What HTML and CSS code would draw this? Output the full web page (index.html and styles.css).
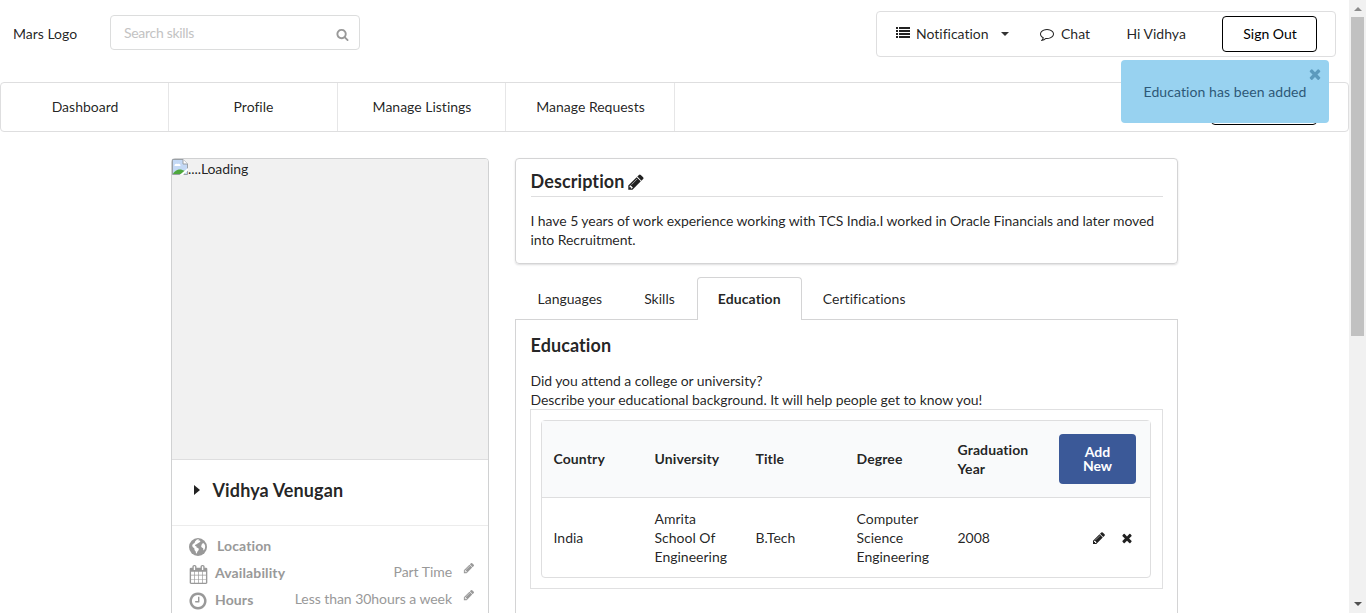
FILE: index.html
```html
<!DOCTYPE html>
<html lang="en">
<head>
<meta charset="utf-8">
<title>Profile</title>
<link rel="stylesheet" href="styles.css">
</head>
<body>
<svg class="sprite" aria-hidden="true">
  <symbol id="search" viewBox="0 0 1792 1792"><path d="M1216 832q0-185-131.5-316.5t-316.5-131.5-316.5 131.5-131.5 316.5 131.5 316.5 316.5 131.5 316.5-131.5 131.5-316.5zm512 832q0 52-38 90t-90 38q-54 0-90-38l-343-342q-179 124-399 124-143 0-273.5-55.5t-225-150-150-225-55.5-273.5 55.5-273.5 150-225 225-150 273.5-55.5 273.5 55.5 225 150 150 225 55.5 273.5q0 220-124 399l343 343q37 37 37 90z"/></symbol>
  <symbol id="pencil" viewBox="0 0 1792 1792"><path d="M491 1536l91-91-235-235-91 91v107h128v128h107zm523-928q0-22-22-22-10 0-17 7l-542 542q-7 7-7 17 0 22 22 22 10 0 17-7l542-542q7-7 7-17zm-54-192l416 416-832 832h-416v-416zm683 96q0 53-37 90l-166 166-416-416 166-165q36-38 90-38 53 0 91 38l235 234q37 39 37 91z"/></symbol>
  <symbol id="times" viewBox="0 0 1792 1792"><path d="M1490 1322q0 40-28 68l-136 136q-28 28-68 28t-68-28l-294-294-294 294q-28 28-68 28t-68-28l-136-136q-28-28-28-68t28-68l294-294-294-294q-28-28-28-68t28-68l136-136q28-28 68-28t68 28l294 294 294-294q28-28 68-28t68 28l136 136q28 28 28 68t-28 68l-294 294 294 294q28 28 28 68z"/></symbol>
  <symbol id="list" viewBox="0 0 14 14"><path d="M0 1h2v2H0zM3 1h11v2H3zM0 4h2v2H0zM3 4h11v2H3zM0 7h2v2H0zM3 7h11v2H3zM0 10h2v2H0zM3 10h11v2H3z"/></symbol>
  <symbol id="comment" viewBox="0 0 1792 1792"><path d="M896 384q-204 0-381.500 69.500t-282 187.500-104.500 255q0 112 71.500 213.500t201.500 175.500l87 50-27 96q-24 91-70 172 152-63 275-171l43-38 57 6q69 8 130 8 204 0 381.500-69.500t282-187.500 104.500-255-104.500-255-282-187.500-381.500-69.500zm896 512q0 174-120 321.500t-326 233-450 85.500q-70 0-145-8-198 175-460 242-49 14-114 22h-5q-15 0-27-10.500t-16-27.500v-1q-3-4-.5-12t2-10 4.500-9.500l6-9 7-8.500 8-9q7-8 31-34.500t34.500-38 31-39.500 32.500-51 27-59 26-76q-157-89-247.500-220t-90.500-281q0-174 120-321.500t326-233 450-85.500 450 85.500 326 233 120 321.500z"/></symbol>
  <symbol id="clock" viewBox="0 0 1792 1792"><path d="M1024 544v448q0 14-9 23t-23 9h-320q-14 0-23-9t-9-23v-64q0-14 9-23t23-9h224v-352q0-14 9-23t23-9h64q14 0 23 9t9 23zm416 352q0-148-73-273t-198-198-273-73-273 73-198 198-73 273 73 273 198 198 273 73 273-73 198-198 73-273zm224 0q0 209-103 385.500t-279.500 279.500-385.500 103-385.500-103-279.500-279.500-103-385.500 103-385.500 279.500-279.500 385.500-103 385.500 103 279.500 279.500 103 385.500z"/></symbol>
  <symbol id="calendar" viewBox="0 0 1792 1792"><path d="M192 1664h288v-288h-288v288zm352 0h320v-288h-320v288zm-352-352h288v-320h-288v320zm352 0h320v-320h-320v320zm-352-384h288v-288h-288v288zm736 736h320v-288h-320v288zm-384-736h320v-288h-320v288zm768 736h288v-288h-288v288zm-384-352h320v-320h-320v320zm-352-864v-288q0-13-9.500-22.500t-22.500-9.500h-64q-13 0-22.500 9.500t-9.500 22.500v288q0 13 9.500 22.500t22.500 9.500h64q13 0 22.500-9.500t9.500-22.500zm736 864h288v-320h-288v320zm-384-384h320v-288h-320v288zm384 0h288v-288h-288v288zm32-480v-288q0-13-9.500-22.500t-22.500-9.500h-64q-13 0-22.500 9.500t-9.500 22.500v288q0 13 9.500 22.500t22.500 9.500h64q13 0 22.500-9.500t9.500-22.500zm384-64v1280q0 52-38 90t-90 38h-1408q-52 0-90-38t-38-90v-1280q0-52 38-90t90-38h128v-96q0-66 47-113t113-47h64q66 0 113 47t47 113v96h384v-96q0-66 47-113t113-47h64q66 0 113 47t47 113v96h128q52 0 90 38t38 90z"/></symbol>
  <symbol id="globe" viewBox="0 0 18 18"><circle cx="9" cy="9" r="9"/><path class="land" d="M8 1.500 10 1.300 9.400 2.600 11 2.600 11.400 3.800 9.800 4.800 8.600 5.600 7.500 6.300 6.300 6.700 6 7.900 7.300 8.300 7.600 9.500 9 9.900 9.900 11 9.400 12.500 8.300 13.700 7.800 15.500 7 15.300 6.700 13.500 5.500 12 5.300 10.300 3.600 8.900 3.200 7 4.300 5.700 5.600 5 6 3.500zM12.900 5.900 14.200 5.100 15.400 5.900 16.200 8.100 15.900 10.600 14.800 12.400 14.200 11.600 14.200 10.200 12.800 9.500 12.100 8.300 12.600 7z"/></symbol>
</svg>

<div class="page">
  <header class="top">
    <span class="logo">Mars Logo</span>
    <label class="search"><input type="text" placeholder="Search skills"><svg class="icon"><use href="#search"/></svg></label>
    <div class="account">
      <a class="notify"><svg class="icon"><use href="#list"/></svg>Notification<i class="caret"></i></a>
      <a class="chat"><svg class="icon"><use href="#comment"/></svg>Chat</a>
      <span class="hello">Hi Vidhya</span>
      <button class="signout">Sign Out</button>
    </div>
  </header>

  <nav class="nav">
    <a>Dashboard</a><a>Profile</a><a>Manage Listings</a><a>Manage Requests</a>
    <span class="share"></span>
  </nav>

  <main class="main">
    <aside class="card">
      <div class="photo"><svg class="broken" viewBox="0 0 16 16"><path d="M.5.500H11l4.500 4.500V15.500H.5z" fill="#c4d9f5" stroke="#9aa0a6"/><path d="M11 .5V5h4.500" fill="#fff" stroke="#9aa0a6"/><path d="M2.500 7a2 2 0 0 1 3-2 2 2 0 0 1 3 2z" fill="#fff"/><path d="M1 15c1-3 5-5 8-4.500l4 1.500v3z" fill="#4fa83d"/><path d="M7.500 16l8.500-7v2.500L11 16z" fill="#fff"/></svg><span>....Loading</span></div>
      <div class="name"><i></i>Vidhya Venugan</div>
      <ul class="facts">
        <li class="location"><svg class="icon"><use href="#globe"/></svg><b>Location</b></li>
        <li><svg class="icon"><use href="#calendar"/></svg><b>Availability</b><span>Part Time</span><svg class="edit"><use href="#pencil"/></svg></li>
        <li><svg class="icon clock"><use href="#clock"/></svg><b>Hours</b><span>Less than 30hours a week</span><svg class="edit"><use href="#pencil"/></svg></li>
      </ul>
    </aside>

    <section class="content">
      <div class="description">
        <h3>Description<svg class="icon"><use href="#pencil"/></svg></h3>
        <p>I have 5 years of work experience working with TCS India.I worked in Oracle Financials and later moved into Recruitment.</p>
      </div>
      <div class="tabs">
        <a>Languages</a><a>Skills</a><a class="active">Education</a><a>Certifications</a>
      </div>
      <div class="panel">
        <h3>Education</h3>
        <p>Did you attend a college or university?<br>Describe your educational background. It will help people get to know you!</p>
        <div class="frame">
          <table>
            <thead><tr><th>Country</th><th>University</th><th>Title</th><th>Degree</th><th>Graduation Year</th><th><button class="add">Add New</button></th></tr></thead>
            <tbody><tr><td>India</td><td>Amrita School Of Engineering</td><td>B.Tech</td><td>Computer Science Engineering</td><td>2008</td><td><div class="actions"><svg class="icon"><use href="#pencil"/></svg><svg class="icon"><use href="#times"/></svg></div></td></tr></tbody>
          </table>
        </div>
      </div>
    </section>
  </main>
</div>

<div class="scrollbar"><i class="up"></i><i class="thumb"></i><i class="down"></i></div>
<div class="toast">Education has been added<svg class="icon"><use href="#times"/></svg></div>
</body>
</html>
```
FILE: styles.css
```css
* { box-sizing: border-box; }
body {
  margin: 0;
  height: 613px;
  overflow: hidden;
  display: flex;
  background: #fff;
  color: rgba(0, 0, 0, .87);
  font: 14px/19px Lato, "Liberation Sans", sans-serif;
  font-variant-ligatures: none;
}
.sprite { position: absolute; width: 0; height: 0; }
svg { fill: currentColor; flex: none; }
.icon { width: 14px; height: 14px; }
button, input { font: inherit; color: inherit; }
.page { width: 1349px; height: 613px; overflow: hidden; }

.top { height: 82px; display: flex; align-items: flex-start; }
.logo { width: 110px; padding: 24px 0 0 13px; }
.search {
  width: 250px; height: 35px; margin-top: 15px; padding: 0 10px 0 13px;
  display: flex; align-items: center;
  border: 1px solid #dcdddd; border-radius: 4px; color: #999;
}
.search input { flex: 1; min-width: 0; padding: 0; border: 0; outline: 0; background: none; letter-spacing: -.4px; letter-spacing: -.3px; }
.search input::placeholder { color: #c3c3c3; opacity: 1; }
.search .icon { width: 13px; height: 13px; margin-top: 4px; }
.account {
  width: 460px; height: 46px; margin: 11px 13px 0 auto; padding: 0 18px 0 19px;
  display: flex; align-items: center;
  border: 1px solid #dededf; border-radius: 4px;
}
.notify, .chat, .hello { padding-bottom: 2px; }
.notify { display: flex; align-items: center; width: 144px; }
.notify .icon { margin: 0 6px 0 0; }
.caret { margin: 1px 0 0 12px; border: 4px solid transparent; border-top-color: #333; border-bottom: 0; }
.chat { display: flex; align-items: center; width: 86.5px; }
.chat .icon { margin: 1px 7px 0 0; }
.hello { flex: 1; }
.signout {
  width: 95px; height: 36px; padding: 0 0 2px 1px;
  border: 1px solid #000; border-radius: 4px; background: #fff; color: #000;
}

.nav {
  height: 50px; display: flex; align-items: stretch;
  border: 1px solid #dededf; border-radius: 4px;
}
.nav a {
  width: 168px; padding: 0 0 2px 1px; display: flex; align-items: center; justify-content: center;
  border-right: 1px solid #e6e6e7;
}
.nav a:nth-child(even) { width: 169px; }
.share { width: 106px; height: 36px; margin: 6px 31px 0 auto; border: 1px solid #000; border-radius: 4px; }

.main { display: flex; gap: 26px; padding: 26px 0 0 171px; }
.card { width: 318px; height: 600px; border: 1px solid #d0d1d2; border-radius: 4px; }
.photo {
  height: 301px; display: flex; align-items: flex-start;
  background: #f1f1f1; border-bottom: 1px solid #dededf; border-radius: 3px 3px 0 0;
}
.photo span { letter-spacing: -.08px; }
.broken { width: 16px; height: 16px; }
.name {
  height: 66px; padding: 0 0 5px 22px; display: flex; align-items: center;
  border-bottom: 1px solid #ececec; font-size: 18px; font-weight: 700; letter-spacing: .12px;
}
.name i { margin-right: 12.5px; border: 5px solid transparent; border-left: 6px solid #222; border-right: 0; }
.facts { margin: 0; padding: 6px 13px 0 17px; list-style: none; color: #999; }
.facts li { height: 27px; display: flex; align-items: center; }
.facts .icon { width: 19px; height: 19px; margin: 3px 7px 0 0; }
.facts .clock { width: 20px; height: 20px; margin: 3px 7px 0 -1px; }
.facts .location .icon { width: 18px; height: 18px; margin: 3px 10px 0 0; }
.land { fill: #fff; }
.facts b { letter-spacing: .12px; }
.facts span { margin: -2px 0 0 auto; letter-spacing: -.05px; }
.facts .edit { width: 12px; height: 12px; margin: -10px 0 0 11px; }

.content { width: 663px; }
.description {
  height: 106px; padding: 10px 14px 0 14.5px;
  border: 1px solid #d4d4d5; border-radius: 4px; box-shadow: 0 1px 2px rgba(34, 36, 38, .15);
}
h3 { margin: 0; font-size: 18px; line-height: 24px; font-weight: 700; letter-spacing: .1px; }
.description h3 { height: 28px; display: flex; border-bottom: 1px solid #dededf; }
.description h3 .icon { width: 18px; height: 18px; margin: 4px 0 0 2px; }
p { margin: 0; letter-spacing: -.07px; }
.description p { margin-top: 14px; }
.tabs { height: 43px; margin-top: 13px; display: flex; position: relative; z-index: 1; }
.tabs a { padding: 11px 20px 0; border: 1px solid transparent; border-bottom: 0; }
.tabs a:first-child { padding-left: 21.5px; }
.tabs .active { width: 105px; margin-left: 1px; background: #fff; border-color: #d4d4d5; border-radius: 4px 4px 0 0; font-weight: 700; letter-spacing: .1px; }
.tabs a:last-child { letter-spacing: .05px; }
.panel { height: 400px; margin-top: -1px; padding: 13px 14px 0 14.5px; border: 1px solid #d4d4d5; }
.panel p { margin-top: 14px; }
.frame { height: 180px; margin-left: -.5px; padding: 10px; border: 1px solid #e0e0e1; }
table {
  width: 610px; height: 158px; table-layout: fixed; border-collapse: separate; border-spacing: 0;
  border: 1px solid #dededf; border-radius: 4px;
}
th, td { padding: 0 11px 0 11.5px; text-align: left; vertical-align: middle; }
th { width: 101px; height: 77px; padding: 0 8px 2px 11.5px; background: #f9fafb; border-bottom: 1px solid #dededf; font-weight: 700; letter-spacing: .1px; }
th:nth-child(5) { padding-bottom: 0; }
th:last-child { width: 103px; padding: 0 14px 0 12px; }
.add {
  width: 77px; height: 50px; padding: 0 20px; display: block;
  border: 0; border-radius: 4px; background: #3b5998; color: #fff; font-weight: 700; line-height: 14px;
}
.actions { display: flex; justify-content: flex-end; gap: 14px; padding-right: 5px; }

.scrollbar {
  width: 17px; height: 613px; display: flex; flex-direction: column; align-items: center;
  background: #f1f1f1;
}
.up, .down { border: 4px solid transparent; }
.up { margin-top: 7px; border-top: 0; border-bottom-color: #8b8b8b; }
.down { margin: auto 0 7px; border-bottom: 0; border-top-color: #505050; }
.thumb { width: 13px; height: 319px; margin-top: 6px; background: #c1c1c1; }

.toast {
  position: absolute; left: 1121px; top: 60px; width: 208px; height: 63px;
  display: flex; align-items: center; justify-content: center;
  border-radius: 4px; background: #98d2f0; color: #2d5877; letter-spacing: .08px;
}
.toast .icon { position: absolute; right: 6px; top: 6px; width: 16px; height: 16px; color: #5c9abd; }
```
